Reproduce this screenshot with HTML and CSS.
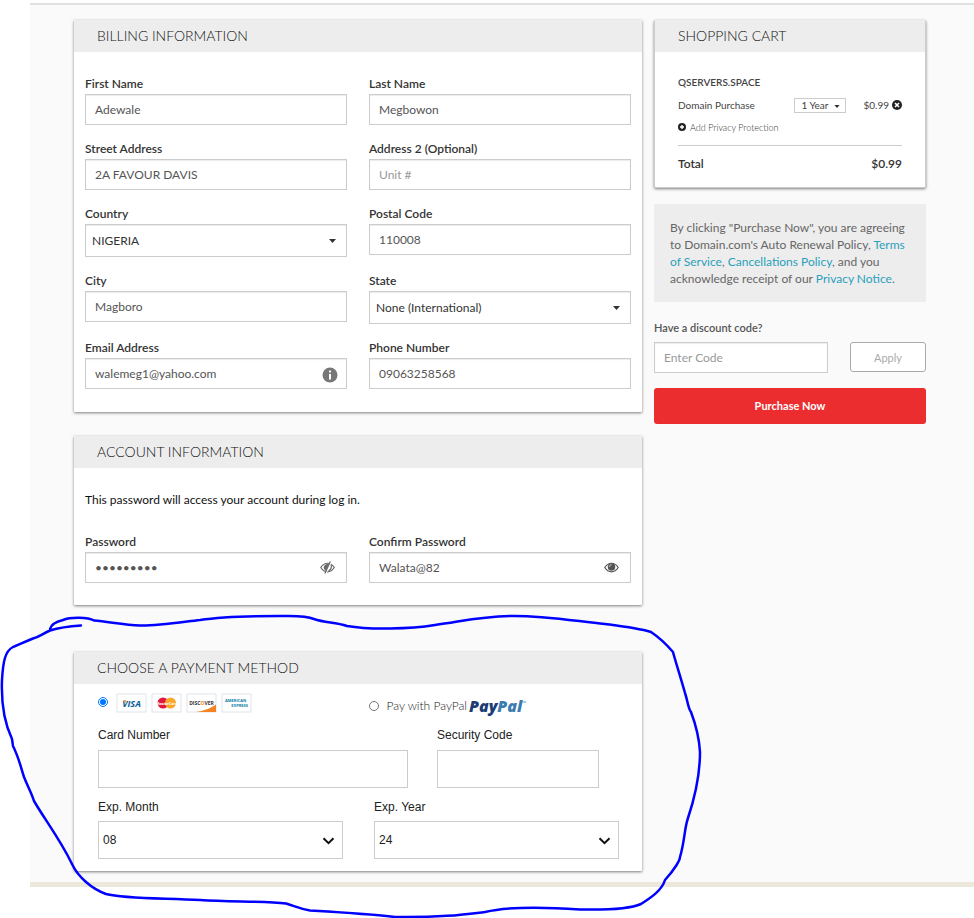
FILE: index.html
```html
<!DOCTYPE html>
<html lang="en">
<head>
<meta charset="utf-8">
<title>Checkout</title>
<link rel="stylesheet" href="styles.css">
</head>
<body>
<main class="checkout">
  <form class="forms">
    <section class="card">
      <h2 class="card-title">BILLING INFORMATION</h2>
      <div class="fields">
        <div class="field"><label for="first">First Name</label><input id="first" type="text" value="Adewale"></div>
        <div class="field"><label for="last">Last Name</label><input id="last" type="text" value="Megbowon"></div>
        <div class="field"><label for="street">Street Address</label><input id="street" type="text" value="2A FAVOUR DAVIS"></div>
        <div class="field"><label for="address2">Address 2 (Optional)</label><input id="address2" type="text" placeholder="Unit #"></div>
        <div class="field"><label for="country">Country</label>
          <div class="control"><select id="country"><option>NIGERIA</option></select>
            <svg class="caret" viewBox="0 0 7 4"><path d="M0 0h7L3.500 4z"/></svg></div></div>
        <div class="field"><label for="postal">Postal Code</label><input id="postal" type="text" value="110008"></div>
        <div class="field"><label for="city">City</label><input id="city" type="text" value="Magboro"></div>
        <div class="field"><label for="state">State</label>
          <div class="control"><select id="state"><option>None (International)</option></select>
            <svg class="caret" viewBox="0 0 7 4"><path d="M0 0h7L3.500 4z"/></svg></div></div>
        <div class="field"><label for="email">Email Address</label>
          <div class="control"><input id="email" type="email" value="walemeg1@yahoo.com">
            <svg class="info" viewBox="0 0 16 16"><circle cx="8" cy="8" r="7.500" fill="#777"/><path d="M7 3.500h2v2H7zM7 7h2v5.500H7z" fill="#fff"/></svg></div></div>
        <div class="field"><label for="phone">Phone Number</label><input id="phone" type="tel" value="09063258568"></div>
      </div>
    </section>

    <section class="card">
      <h2 class="card-title">ACCOUNT INFORMATION</h2>
      <p class="note">This password will access your account during log in.</p>
      <div class="fields fields-account">
        <div class="field"><label for="password">Password</label>
          <div class="control"><input id="password" type="password" value="Walata@82">
            <svg class="eye" viewBox="0 0 14 12"><path d="M.7 6C2.500 3.200 4.500 2 7 2s4.500 1.200 6.300 4C11.500 8.800 9.500 10 7 10S2.500 8.800.7 6z" fill="none" stroke="#666" stroke-width="1.100"/><path d="M8.200 2.800 5.500 9C4 8.400 3.600 7.200 3.600 5.800 3.700 4 5.400 2.400 8.200 2.800z" fill="#666"/><path d="M10.600.5 5.600 11.500" stroke="#fff" stroke-width="1"/><path d="M9.600.5 4.600 11.500M10.400 3.500C11 6 10 8 8 9" fill="none" stroke="#666" stroke-width="1.100"/></svg></div></div>
        <div class="field"><label for="confirm">Confirm Password</label>
          <div class="control"><input id="confirm" type="text" value="Walata@82">
            <svg class="eye" viewBox="0 0 14 12"><path d="M.7 6C2.500 3.200 4.500 2 7 2s4.500 1.200 6.300 4C11.500 8.800 9.500 10 7 10S2.500 8.800.7 6z" fill="none" stroke="#555" stroke-width="1.100"/><circle cx="7" cy="5.500" r="3.500" fill="#555"/><path d="M5 5.400C5 4.200 5.800 3.500 7 3.500" fill="none" stroke="#fff" stroke-width=".7"/></svg></div></div>
      </div>
    </section>

    <section class="card card-payment">
      <h2 class="card-title">CHOOSE A PAYMENT METHOD</h2>
      <div class="payment">
        <div class="methods">
          <div class="method">
            <input type="radio" name="method" id="by-card" aria-label="Credit card" checked>
            <label class="brands" for="by-card">
              <svg viewBox="0 0 31 20"><rect class="plate" x="1" y="1" width="29" height="18"/><text class="visa" x="15.500" y="14" text-anchor="middle">VISA</text><path d="M7 7h3l1 4z" fill="#e9a63a"/></svg>
              <svg viewBox="0 0 31 20"><rect class="plate" x="1" y="1" width="29" height="18"/><circle cx="12" cy="10" r="5.500" fill="#e3173e"/><circle cx="19.500" cy="10" r="5.500" fill="#f9a82c"/><text class="master" x="15.500" y="12" text-anchor="middle">MasterCard</text></svg>
              <svg viewBox="0 0 31 20"><rect class="plate" x="1" y="1" width="29" height="18"/><path d="M10 19C18 18 25 15 30 11.500V19z" fill="#f58220"/><text class="discover" x="15.500" y="12" text-anchor="middle">DISC<tspan fill="#f58220">O</tspan>VER</text></svg>
              <svg viewBox="0 0 31 20"><rect class="plate" x="1" y="1" width="29" height="18"/><text class="amex" x="4" y="9">AMERICAN</text><text class="amex" x="27" y="14" text-anchor="end">EXPRESS</text></svg>
            </label>
          </div>
          <div class="method">
            <input type="radio" name="method" id="by-paypal">
            <label class="paypal" for="by-paypal">Pay with PayPal
              <span class="logo">Pay<span class="pal">Pal</span><sup>™</sup></span></label>
          </div>
        </div>
        <div class="pay-row pay-card">
          <div class="pay-field"><label for="number">Card Number</label><input id="number" type="text"></div>
          <div class="pay-field"><label for="code">Security Code</label><input id="code" type="text"></div>
        </div>
        <div class="pay-row pay-expiry">
          <div class="pay-field"><label for="month">Exp. Month</label>
            <div class="control"><select id="month"><option>08</option></select>
              <svg class="chevron" viewBox="0 0 12 8"><path d="M1 1.200 6 6.200 11 1.200"/></svg></div></div>
          <div class="pay-field"><label for="year">Exp. Year</label>
            <div class="control"><select id="year"><option>24</option></select>
              <svg class="chevron" viewBox="0 0 12 8"><path d="M1 1.200 6 6.200 11 1.200"/></svg></div></div>
        </div>
      </div>
    </section>
  </form>

  <aside class="side">
    <section class="card cart">
      <h2 class="card-title">SHOPPING CART</h2>
      <div class="cart-body">
        <h3 class="domain">QSERVERS.SPACE</h3>
        <div class="line">
          <label for="term">Domain Purchase</label>
          <div class="control"><select id="term"><option>1 Year</option></select>
            <svg class="caret" viewBox="0 0 7 4"><path d="M0 0h7L3.500 4z"/></svg></div>
          <span class="price">$0.99</span>
          <button class="remove" type="button" aria-label="Remove"><svg viewBox="0 0 10 10"><circle cx="5" cy="5" r="5" fill="#222"/><path d="M3 3l4 4M7 3 3 7" stroke="#fff" stroke-width="1.600"/></svg></button>
        </div>
        <a class="privacy" href="#"><svg viewBox="0 0 8 8"><circle cx="4" cy="4" r="4" fill="#222"/><path d="M4 2v4M2 4h4" stroke="#fff" stroke-width="1.400"/></svg>Add Privacy Protection</a>
        <div class="total"><span>Total</span><span>$0.99</span></div>
      </div>
    </section>
    <p class="terms">By clicking "Purchase Now", you are agreeing to Domain.com's Auto Renewal Policy, <a href="#">Terms of Service</a>, <a href="#">Cancellations Policy</a>, and you acknowledge receipt of our <a href="#">Privacy Notice</a>.</p>
    <label class="discount-label" for="discount">Have a discount code?</label>
    <div class="discount">
      <input id="discount" type="text" placeholder="Enter Code">
      <button class="apply" type="button">Apply</button>
    </div>
    <button class="purchase" type="button">Purchase Now</button>
  </aside>
</main>
<svg class="ink" viewBox="0 0 974 918" aria-hidden="true">
  <path d="M81 625.500C66 626.500 58 628 50 630.500C42 634 39 637 33 638.500C22 643 16 646 13 647C5 651 3 662 2 680C1 705 4 722 12 739L13 746C19 758 21 768 24 777C28 787 32 794 34 801C45 820 60 839 72 864C78 877 92 889 106 894C125 899 165 898 200 900C230 902 265 901 286 903.500C295 906 300 909 310 910.500C335 912 370 914 395 917C440 917.500 460 915 485 912C510 906 545 907 580 909.500C605 910 630 909 641 904C652 897 662 890 665 880C675 869 680 860 680 857C685 840 684 830 688 818C694 800 700 775 700 752C699 735 694 720 691 712C688 708 688 702 685 693C680 675 675 660 673 652C667 645 660 638 651 632C637 628 620 626 605 624C575 621 545 616 515 616C480 616 460 622 435 625C410 629 370 630 347 626C335 622 325 623 314 619C305 615 290 616 280 616C240 616 220 617 200 620C175 623 155 626 140 625.500C125 625 110 622 94 620.500C88 617 70 617 63 620C55 622 51 625 50 629"/>
</svg>
</body>
</html>
```
FILE: styles.css
```css
* { box-sizing: border-box; }

body {
  position: relative;
  margin: 0;
  padding: 3px 0 31px 30px;
  background: #fff;
  color: #333;
  font: 12px/17px Lato, "Liberation Sans", sans-serif;
}

h2, h3, p { margin: 0; }
input, select, button { font: inherit; color: inherit; margin: 0; }
a { color: #2a9fbc; text-decoration: none; }

.checkout {
  display: grid;
  grid-template-columns: minmax(0, 1fr) 272px;
  gap: 12px;
  align-items: start;
  padding: 15px 48px 11px 44px;
  background: #fafafa;
  border-top: 2px solid #e0e0e0;
  border-bottom: 5px solid #ece8dc;
}

.forms { display: grid; gap: 24px; }

.card {
  background: #fff;
  box-shadow: 0 1px 3px rgba(0, 0, 0, .5);
  border-radius: 1px;
}
.card-payment { margin-top: 23px; }

.card-title {
  padding: 7px 23px;
  background: #ededed;
  font-size: 14px;
  line-height: 18px;
  font-weight: 300;
  color: #111;
}

/* Billing and account fields */
.fields {
  display: grid;
  grid-template-columns: 1fr 1fr;
  gap: 14px 22px;
  align-items: start;
  padding: 22px 11px 23px;
}
.fields-account { padding-top: 24px; padding-bottom: 22px; }
.note { padding: 23px 11px 0; color: #111; }

.field label {
  display: block;
  height: 20px;
  line-height: 20px;
  font-weight: 600;
}
.field input, .field select, .discount input {
  display: block;
  width: 100%;
  height: 31px;
  padding: 0 9px;
  border: 1px solid #ccc;
  border-radius: 0;
  background: #fff;
  box-shadow: inset 0 1px 1px rgba(0, 0, 0, .08);
  color: #555;
}
.field select { height: 33px; padding: 0 6px; color: #333; }
input::placeholder { color: #999; opacity: 1; }
select { appearance: none; }

.control { position: relative; }
.control svg { position: absolute; pointer-events: none; }
.caret { right: 11px; top: 15px; width: 7px; height: 4px; fill: #333; }
.info { right: 9px; top: 9px; width: 16px; height: 16px; }
.eye { right: 12px; top: 9px; width: 15px; height: 13px; }

/* Payment method */
.payment {
  padding: 9px 23px 12px 24px;
  font-family: "Liberation Sans", Arial, sans-serif;
  color: #222;
}
.methods {
  display: grid;
  grid-template-columns: 1fr 1fr;
  gap: 20px;
  height: 32px;
}
.method { display: flex; align-items: flex-start; }
.method input { width: 10px; height: 10px; margin-top: 4px; }
.method + .method input { margin-top: 8px; }
.brands { display: flex; gap: 4px; margin-left: 8px; }
.brands svg { width: 31px; height: 20px; }
.plate { fill: #fff; stroke: #dfe5ea; stroke-width: 1px; }
.visa { font: italic 700 9px "Open Sans", sans-serif; fill: #0a5b9c; }
.master { font: italic 700 4px "Open Sans", sans-serif; fill: #fff; }
.discover { font: 700 5px "Open Sans", sans-serif; fill: #333; }
.amex { font: 700 4px "Open Sans", sans-serif; fill: #0b7dab; }
.paypal {
  display: flex;
  gap: 2px;
  margin: 4px 0 0 8px;
  font: 300 12px/18px Lato, sans-serif;
}
.logo { font: italic 800 16px/18px "Open Sans", sans-serif; color: #1b3d73; }
.pal { color: #3b7bb0; }
.logo sup { font-size: 5px; line-height: 5px; vertical-align: 7px; font-weight: 400; color: #3b7bb0; }

.pay-row { display: grid; }
.pay-card { grid-template-columns: 310fr 162fr; gap: 29px; padding-right: 20px; }
.pay-expiry { grid-template-columns: 1fr 1fr; gap: 31px; margin-top: 9px; }
.pay-field label { display: block; height: 24px; line-height: 20px; }
.pay-card label { height: 25px; }
.pay-field input, .pay-field select {
  display: block;
  width: 100%;
  height: 38px;
  padding: 0 4px;
  border: 1px solid #ccc;
  border-radius: 0;
  background: #fff;
}
.chevron { right: 8px; top: 16px; width: 13px; height: 8px; fill: none; stroke: #111; stroke-width: 2px; }

/* Shopping cart */
.cart { border: 1px solid #ccc; border-top: 0; border-radius: 2px; }
.cart-body { padding: 22px 23px 15px; font-size: 10px; color: #444; }
.domain { font-size: 10px; line-height: 16px; font-weight: 600; }
.line { display: flex; align-items: center; height: 22px; margin-top: 4px; }
.line label { flex: 1; }
.line select {
  display: block;
  width: 52px;
  height: 15px;
  padding: 0 6px;
  border: 1px solid #ccc;
  border-radius: 0;
  background: #fff;
  line-height: 13px;
}
.line .caret { right: 6px; top: 7px; width: 6px; height: 3px; }
.price { margin-left: 17px; }
.remove { width: 10px; height: 10px; margin-left: 3px; padding: 0; border: 0; background: none; }
.remove svg { display: block; }
.privacy { display: flex; align-items: center; gap: 4px; height: 18px; margin-top: 2px; font-size: 9px; font-weight: 300; color: #333; }
.privacy svg { width: 8px; height: 8px; }
.total {
  display: flex;
  justify-content: space-between;
  margin-top: 9px;
  padding-top: 9px;
  border-top: 1px solid #ccc;
  font-size: 12px;
  font-weight: 600;
  color: #333;
}

/* Terms and purchase */
.terms { margin-top: 16px; padding: 15px 16px; background: #ededed; color: #666; }
.discount-label { display: block; margin-top: 17px; font-size: 11px; line-height: 18px; font-weight: 600; color: #555; }
.discount { display: flex; gap: 22px; margin-top: 5px; }
.discount input { flex: 1; min-width: 0; }
.apply {
  width: 76px;
  height: 30px;
  border: 1px solid #aaa;
  border-radius: 3px;
  background: #fff;
  color: #aaa;
  font-size: 11px;
}
.purchase {
  display: block;
  width: 100%;
  height: 36px;
  margin-top: 15px;
  padding: 0 0 2px;
  border: 0;
  border-radius: 3px;
  background: #eb2d2f;
  color: #fff;
  font-size: 11px;
  font-weight: 700;
}

/* Freehand loop drawn over the payment card */
.ink { position: absolute; left: 0; top: 0; width: 974px; height: 918px; pointer-events: none; }
.ink path { fill: none; stroke: #00f; stroke-width: 2.500px; stroke-linecap: round; stroke-linejoin: round; }
```
